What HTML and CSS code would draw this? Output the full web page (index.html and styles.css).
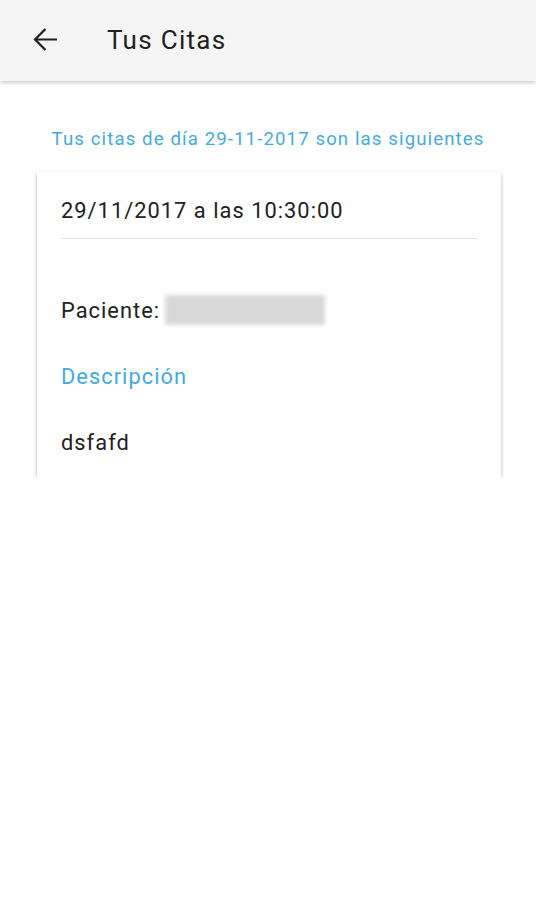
FILE: index.html
```html
<!DOCTYPE html>
<html lang="es">
<head>
    <meta charset="UTF-8">
    <meta name="viewport" content="width=device-width, initial-scale=1.0">
    <title>Tus Citas</title>
    <link rel="stylesheet" href="styles.css">
</head>
<body>
    <div class="toolbar">
        <svg class="back" width="25" height="25" viewBox="0 0 25 25">
            <path d="M24 12.5H2 M12.5 2 L2 12.5 L12.5 23" fill="none" stroke="#212121" stroke-width="2.2"/>
        </svg>
        <span class="title">Tus Citas</span>
    </div>

    <div class="content">
        <p class="subtitle">Tus citas de día 29-11-2017 son las siguientes</p>

        <div class="card">
            <div class="fecha">29/11/2017 a las 10:30:00</div>
            <div class="paciente">Paciente: <span class="oculto"></span></div>
            <div class="label">Descripción</div>
            <div class="desc">dsfafd</div>
        </div>
    </div>
</body>
</html>
```

FILE: styles.css
```css
body {
    margin: 0;
    background-color: #fff;
    font-family: Roboto, "Noto Sans", sans-serif;
    color: #212121;
    letter-spacing: 0.065em;
}

.toolbar {
    height: 81px;
    background-color: #f5f5f5;
    display: flex;
    align-items: center;
    box-shadow: 0 2px 4px rgba(0, 0, 0, 0.2);
    position: relative;
}

.back {
    margin-left: 33px;
    margin-top: -2px;
}

.title {
    margin-left: 49px;
    font-size: 26px;
    margin-top: -2px;
    letter-spacing: 0.05em;
}

.content {
    padding: 0 36px;
}

.subtitle {
    color: #42abdd;
    font-size: 18.6px;
    letter-spacing: 0.06em;
    text-align: center;
    margin: 0;
    padding-top: 47px;
    height: 44px;
}

.card {
    padding: 0 24px;
    box-shadow: 0 2px 4px rgba(0, 0, 0, 0.3);
    width: 416px;
    margin-left: 1px;
}

.fecha {
    font-size: 21.8px;
    padding-top: 26px;
    height: 40px;
    border-bottom: 1px solid #e0e0e0;
}

.paciente {
    font-size: 21.8px;
    margin-top: 56px;
    display: flex;
    align-items: center;
    gap: 5px;
}

.oculto {
    display: inline-block;
    width: 160px;
    height: 30px;
    background-color: #d8d8d8;
    filter: blur(2px);
}

.label {
    color: #42abdd;
    font-size: 21.8px;
    margin-top: 39px;
}

.desc {
    font-size: 21.8px;
    margin-top: 41px;
    padding-bottom: 22px;
}
```
